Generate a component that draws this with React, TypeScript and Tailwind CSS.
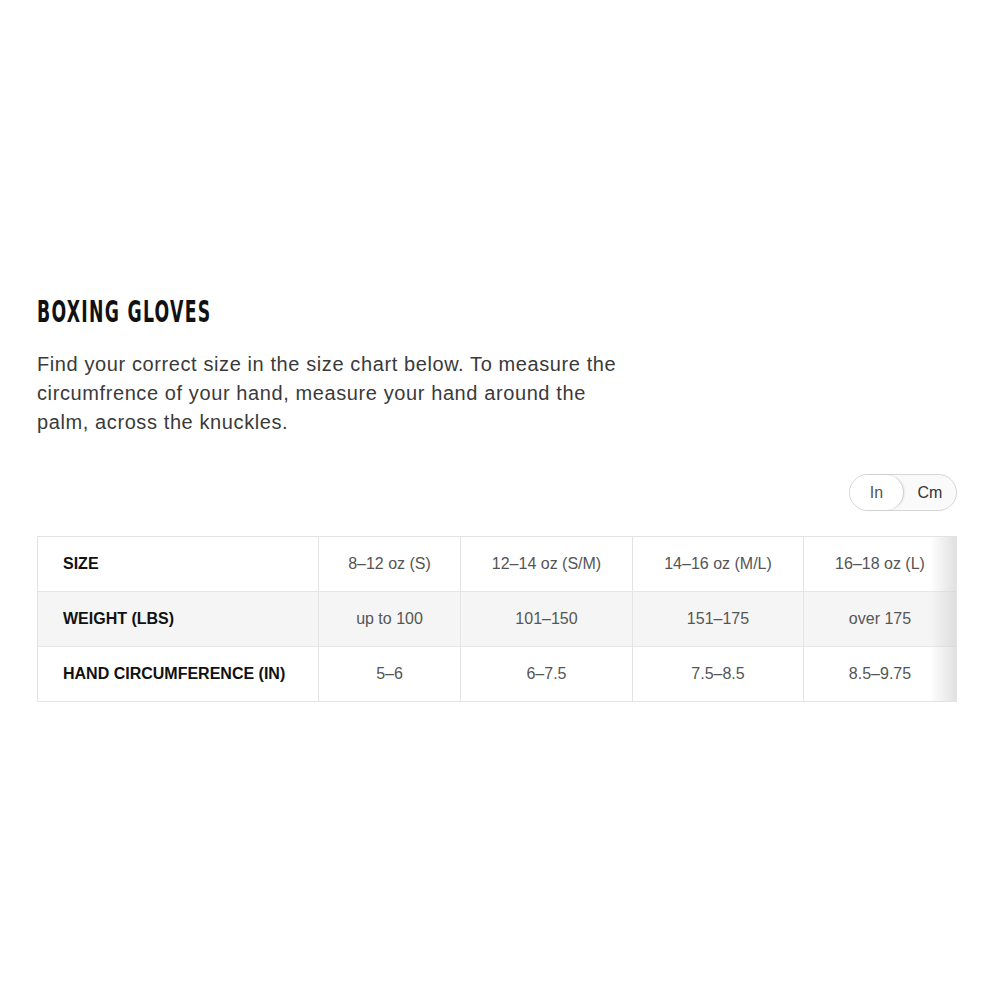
import React from "react";

const cols = ["8–12 oz (S)", "12–14 oz (S/M)", "14–16 oz (M/L)", "16–18 oz (L)"];
const rows: { label: string; values: string[]; shaded: boolean }[] = [
  { label: "SIZE", values: cols, shaded: false },
  { label: "WEIGHT (LBS)", values: ["up to 100", "101–150", "151–175", "over 175"], shaded: true },
  { label: "HAND CIRCUMFERENCE (IN)", values: ["5–6", "6–7.5", "7.5–8.5", "8.5–9.75"], shaded: false },
];
const widths = ["w-[280px]", "w-[142px]", "w-[172px]", "w-[171px]", "flex-1"];

export default function App() {
  return (
    <div className="w-[1000px] h-[1000px] bg-white overflow-hidden font-['Liberation_Sans','Helvetica',sans-serif]">
      <div className="pt-[297px] pl-[37px] pr-[43px]">
        <h1 className="text-[30px] leading-[30px] font-bold text-[#111] tracking-[2px] font-['DejaVu_Sans_Condensed','Liberation_Sans',sans-serif] scale-x-[0.64] origin-left">
          BOXING GLOVES
        </h1>
        <p className="mt-[23px] w-[592px] text-[20px] leading-[29px] tracking-[0.6px] text-[#3a3a3a]">
          Find your correct size in the size chart below. To measure the circumfrence of your hand, measure your hand around the palm, across the knuckles.
        </p>
        <div className="mt-[37px] flex justify-end">
          <div className="relative flex h-[37px] w-[108px] rounded-full border border-[#d6d6d6] bg-[#fafafa] text-[16px] text-[#444]">
            <div className="flex h-[35px] w-[54px] items-center justify-center rounded-full border-r border-[#d0d0d0] bg-white text-[#555] shadow-[1px_0_2px_rgba(0,0,0,0.08)]">
              In
            </div>
            <div className="flex flex-1 items-center justify-center text-[#333]">Cm</div>
          </div>
        </div>
        <div className="relative mt-[25px] border border-[#e3e3e3]">
          {rows.map((r, i) => (
            <div
              key={r.label}
              className={`flex ${i > 0 ? "h-[55px] border-t border-[#e6e6e6]" : "h-[54px]"} ${r.shaded ? "bg-[#f5f5f5]" : "bg-white"}`}
            >
              <div className={`${widths[0]} flex items-center pl-[25px] text-[16px] font-bold text-[#111]`}>{r.label}</div>
              {r.values.map((v, j) => (
                <div
                  key={j}
                  className={`${widths[j + 1]} flex items-center justify-center border-l border-[#e3e3e3] text-[16px] text-[#555]`}
                >
                  {v}
                </div>
              ))}
            </div>
          ))}
          <div className="pointer-events-none absolute right-0 top-0 bottom-0 w-[26px] bg-gradient-to-r from-transparent to-[#d4d4d4]/70" />
        </div>
      </div>
    </div>
  );
}
